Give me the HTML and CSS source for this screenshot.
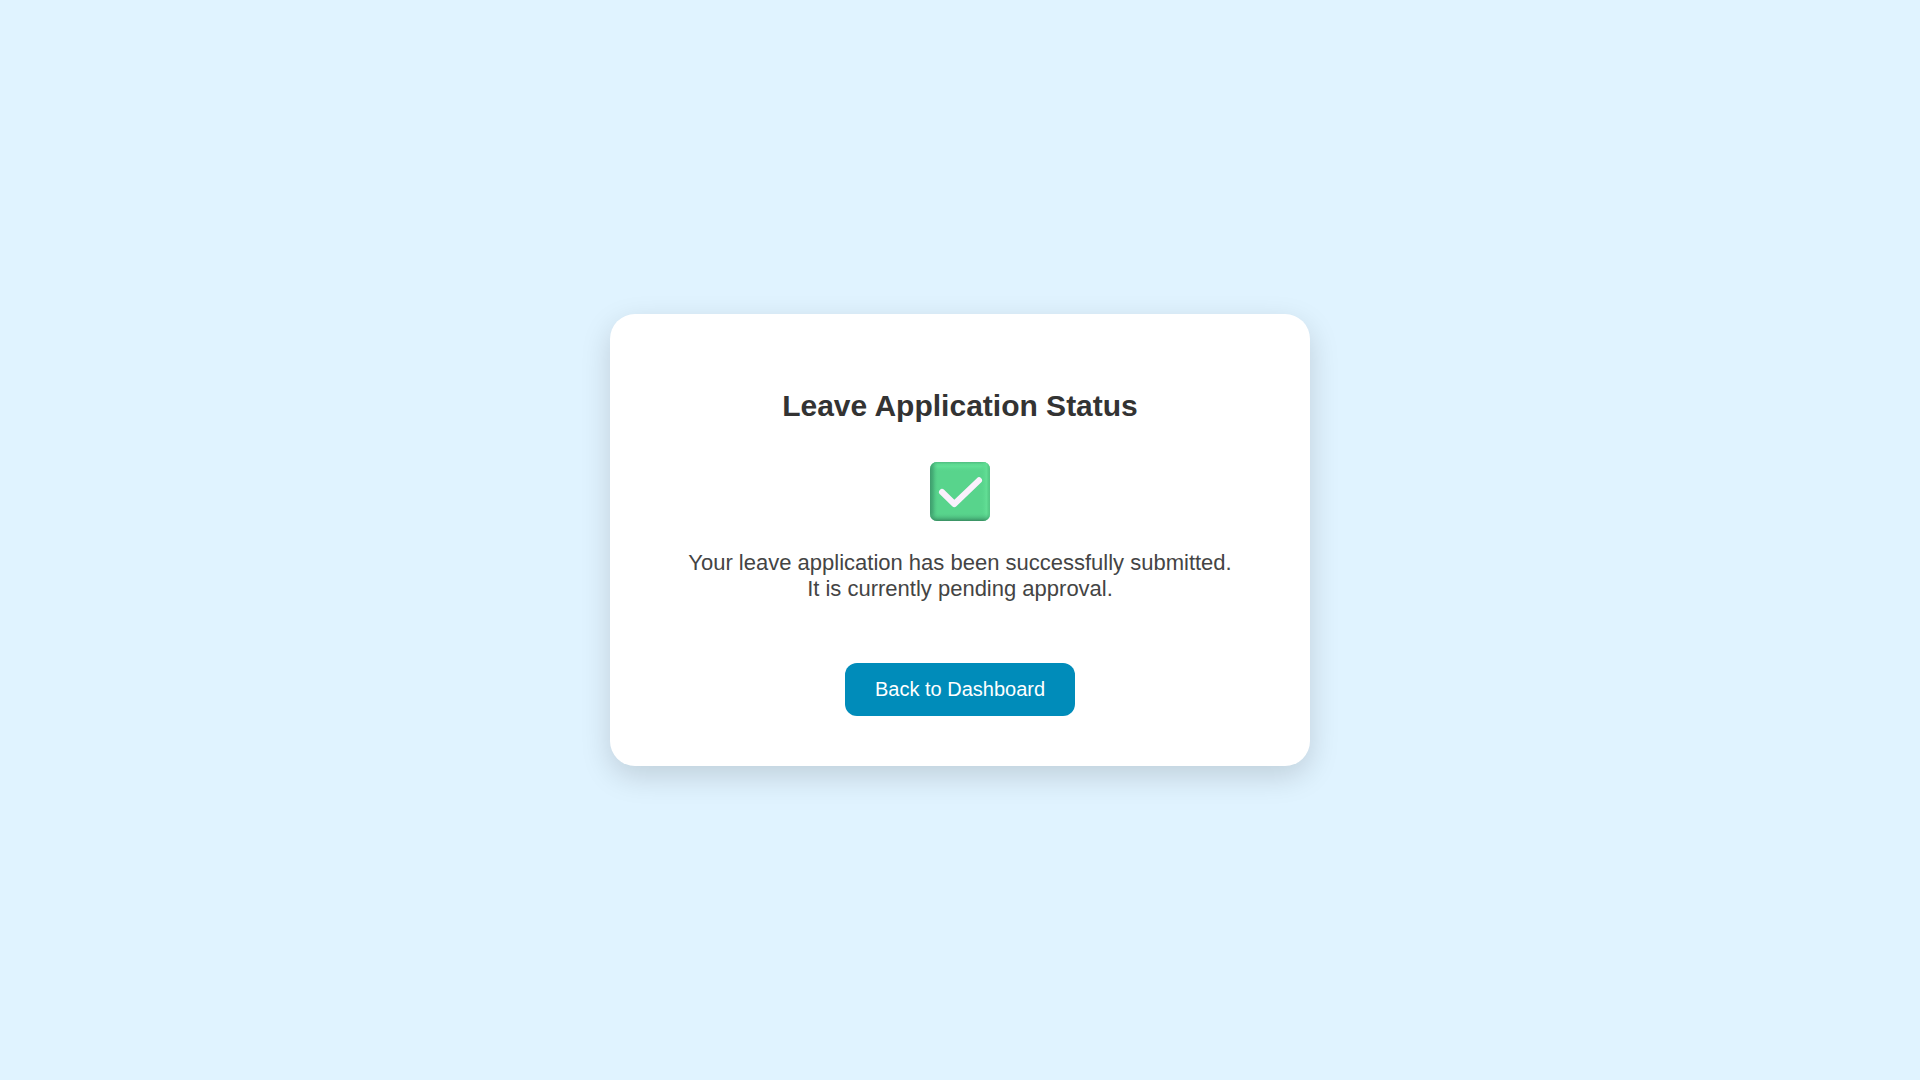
FILE: index.html
```html
<!DOCTYPE html>
<html lang="en">
<head>
  <meta charset="utf-8">
  <meta name="viewport" content="width=device-width, initial-scale=1">
  <title>Leave Application Status</title>
  <link rel="stylesheet" href="styles.css">
</head>
<body class="page">
  <main class="card">
    <h1 class="card-title">Leave Application Status</h1>
    <svg class="status-icon" viewBox="0 0 60 60" role="img" aria-label="Success">
      <defs>
        <linearGradient id="left-edge" x1="0" x2="1" y1="0" y2="0">
          <stop offset="0" stop-color="#3a9468" stop-opacity=".85"/>
          <stop offset=".05" stop-color="#389468" stop-opacity=".55"/>
          <stop offset=".14" stop-color="#58d48c" stop-opacity="0"/>
        </linearGradient>
        <linearGradient id="right-edge" x1="1" x2="0" y1="0" y2="0">
          <stop offset="0" stop-color="#55c485"/>
          <stop offset=".03" stop-color="#58cf89"/>
          <stop offset=".06" stop-color="#62de95"/>
          <stop offset=".16" stop-color="#58d48c" stop-opacity="0"/>
        </linearGradient>
        <linearGradient id="top-edge" x1="0" x2="0" y1="0" y2="1">
          <stop offset="0" stop-color="#50bd80"/>
          <stop offset=".04" stop-color="#5dda91"/>
          <stop offset=".08" stop-color="#63e298" stop-opacity=".8"/>
          <stop offset=".17" stop-color="#58d48c" stop-opacity="0"/>
        </linearGradient>
        <linearGradient id="bottom-edge" x1="0" x2="0" y1="1" y2="0">
          <stop offset="0" stop-color="#328059" stop-opacity=".85"/>
          <stop offset=".05" stop-color="#3d9c6b" stop-opacity=".5"/>
          <stop offset=".14" stop-color="#58d48c" stop-opacity="0"/>
        </linearGradient>
      </defs>
      <rect width="60" height="59" rx="7" fill="#58d48c"/>
      <rect width="60" height="59" rx="7" fill="url(#top-edge)"/>
      <rect width="60" height="59" rx="7" fill="url(#right-edge)"/>
      <rect width="60" height="59" rx="7" fill="url(#left-edge)"/>
      <rect width="60" height="59" rx="7" fill="url(#bottom-edge)"/>
      <path d="M12 30 24.300 42 49 18.300" fill="none" stroke="#faf0fc" stroke-width="6" stroke-linecap="round" stroke-linejoin="round"/>
    </svg>
    <p class="card-message">Your leave application has been successfully submitted.<br>It is currently pending approval.</p>
    <button class="back-button" type="button">Back to Dashboard</button>
  </main>
</body>
</html>
```
FILE: styles.css
```css
* {
  box-sizing: border-box;
}

.page {
  display: flex;
  align-items: center;
  justify-content: center;
  min-height: 100vh;
  margin: 0;
  background: #e0f3ff;
  font-family: "Liberation Sans", Arial, sans-serif;
}

.card {
  display: flex;
  flex-direction: column;
  align-items: center;
  width: 100%;
  max-width: 700px;
  padding: 75px 50px 50px;
  border-radius: 25px;
  background: #fff;
  box-shadow: 0 10px 30px rgba(0, 0, 0, 0.15);
  text-align: center;
}

.card-title {
  margin: 0 0 39px;
  color: #333;
  font-size: 30px;
  line-height: 34px;
}

.status-icon {
  width: 60px;
  height: 60px;
  margin-bottom: 28px;
}

.card-message {
  margin: 0 0 61px;
  color: #444;
  font-size: 22px;
  line-height: 26px;
}

.back-button {
  padding: 15px 30px;
  border: 0;
  border-radius: 12px;
  background: #008cba;
  color: #fff;
  font-family: inherit;
  font-size: 20px;
  line-height: 23px;
  cursor: pointer;
}
```
